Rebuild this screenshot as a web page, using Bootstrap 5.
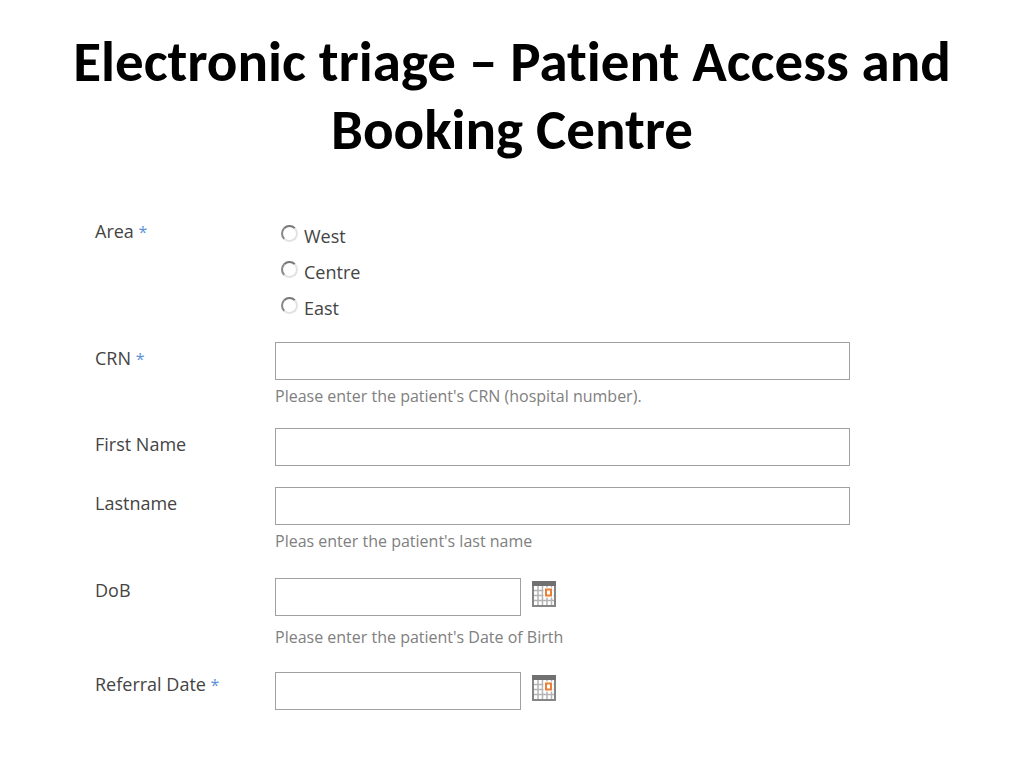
<!DOCTYPE html>
<html lang="en">
<head>
<meta charset="utf-8">
<meta name="viewport" content="width=device-width, initial-scale=1">
<title>Electronic triage</title>
<link href="https://cdn.jsdelivr.net/npm/bootstrap@5.3.0/dist/css/bootstrap.min.css" rel="stylesheet">
<style>
body { font-family: "Open Sans", "Noto Sans", sans-serif; font-size: 18px; color: #444; background: #fff; }
.page-title { font-family: Carlito, Lato, sans-serif; font-variant-ligatures: none; font-weight: 700; font-size: 57px; line-height: 68px; color: #000; padding: 28px 40px 0; margin-bottom: 51px; }
.triage-form { padding: 0 17% 40px 95px; }
.field-label { flex: 0 0 180px; line-height: 32px; padding: 0; }
.date-row .field-label { line-height: 24px; }
.req { color: #5b8fd8; font-size: 16px; }
.text-field { height: 38px; border: 1px solid #a0a0a0; border-radius: 0; padding: 4px 8px; }
.date-field { width: 246px; }
.hint { font-size: 16px; line-height: 32px; color: #808080; }
.date-hint { padding-top: 5px; margin-bottom: 3px; }
.wide-gap { margin-bottom: 21px; }
.area-options { padding: 3px 0 0 6px; }
.area-option { height: 36px; gap: 6px; }
.area-radio { appearance: none; width: 17px; height: 17px; margin: 0 0 6px; border: 2px solid; border-color: #777 #e2e2e2 #e2e2e2 #888; border-radius: 50%; background: #fff; }
.area-radio:checked { box-shadow: inset 0 0 0 3px #fff; background: #444; }
.cal-btn { padding: 0; border: 0; background: none; line-height: 0; margin: 0 0 6px 11px; }
</style>
</head>
<body>
<svg class="d-none">
  <symbol id="calendar" viewBox="0 0 24 26">
    <path fill="#fff" d="M0 0h24v26H0z"/>
    <path fill="none" stroke="#b4b4b4" stroke-width="1.500" d="M6 5v20M10.500 5v20M15 5v20M19.500 5v20M1 9.500h22M1 14.500h22M1 19.500h22"/>
    <path fill="none" stroke="#858585" stroke-width="2" d="M1 1h22v24H1z"/>
    <path fill="#707070" d="M0 0h24v5H0z"/>
    <path fill="#fff" stroke="#fff" stroke-width="4" d="M13.500 8.500h6v6h-6z"/>
    <path fill="#fff" stroke="#e88038" stroke-width="2" d="M14 8.500h5v6h-5z"/>
  </symbol>
</svg>
<h1 class="page-title text-center">Electronic triage – Patient Access and Booking Centre</h1>
<form class="triage-form">
  <div class="d-flex mb-3" role="radiogroup" aria-labelledby="area">
    <div class="field-label" id="area">Area <span class="req">*</span></div>
    <div class="area-options">
      <div class="area-option d-flex align-items-center"><input class="area-radio" type="radio" name="area" id="west"><label for="west">West</label></div>
      <div class="area-option d-flex align-items-center"><input class="area-radio" type="radio" name="area" id="centre"><label for="centre">Centre</label></div>
      <div class="area-option d-flex align-items-center"><input class="area-radio" type="radio" name="area" id="east"><label for="east">East</label></div>
    </div>
  </div>
  <div class="d-flex mb-3">
    <label class="field-label" for="crn">CRN <span class="req">*</span></label>
    <div class="flex-grow-1">
      <input class="form-control text-field" type="text" id="crn">
      <div class="hint">Please enter the patient's CRN (hospital number).</div>
    </div>
  </div>
  <div class="d-flex wide-gap">
    <label class="field-label" for="first">First Name</label>
    <div class="flex-grow-1"><input class="form-control text-field" type="text" id="first"></div>
  </div>
  <div class="d-flex wide-gap">
    <label class="field-label" for="last">Lastname</label>
    <div class="flex-grow-1">
      <input class="form-control text-field" type="text" id="last">
      <div class="hint">Pleas enter the patient's last name</div>
    </div>
  </div>
  <div class="d-flex mb-3 date-row">
    <label class="field-label" for="dob">DoB</label>
    <div class="flex-grow-1">
      <div class="d-flex align-items-center">
        <input class="form-control text-field date-field" type="text" id="dob">
        <button class="cal-btn" type="button" aria-label="Pick date of birth"><svg width="24" height="26"><use href="#calendar"/></svg></button>
      </div>
      <div class="hint date-hint">Please enter the patient's Date of Birth</div>
    </div>
  </div>
  <div class="d-flex date-row">
    <label class="field-label" for="referral">Referral Date <span class="req">*</span></label>
    <div class="flex-grow-1 d-flex align-items-center">
      <input class="form-control text-field date-field" type="text" id="referral">
      <button class="cal-btn" type="button" aria-label="Pick referral date"><svg width="24" height="26"><use href="#calendar"/></svg></button>
    </div>
  </div>
</form>
<script src="https://cdn.jsdelivr.net/npm/bootstrap@5.3.0/dist/js/bootstrap.bundle.min.js"></script>
</body>
</html>
